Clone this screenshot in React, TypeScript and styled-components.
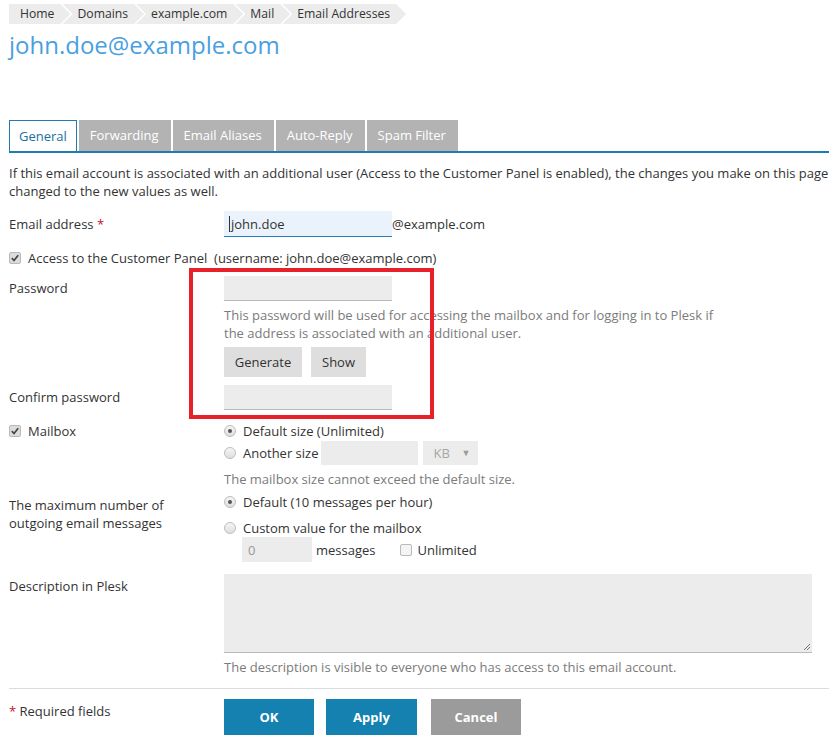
import React from 'react'
import styled, { createGlobalStyle } from 'styled-components'

const GlobalStyle = createGlobalStyle`
  html, body {
    margin: 0;
    padding: 0;
    background: #fff;
    overflow: hidden;
  }
  body {
    font-family: 'Open Sans', 'Liberation Sans', sans-serif;
    font-size: 13px;
    line-height: 18px;
    color: #333;
  }
`

const Page = styled.div`
  position: relative;
  width: 900px;
  padding: 4px 0 0 9px;
  box-sizing: border-box;
`

const Crumbs = styled.ul`
  display: flex;
  list-style: none;
  margin: 0;
  padding: 0;
  height: 20px;
  font-size: 12.2px;
`

const Crumb = styled.li<{ $first?: boolean }>`
  display: flex;
  align-items: center;
  height: 20px;
  background: #ececec;
  color: #333;
  padding: 0 16px 0 ${(p) => (p.$first ? '11px' : '15px')};
  margin-left: ${(p) => (p.$first ? '0' : '-8px')};
  clip-path: ${(p) =>
    p.$first
      ? 'polygon(0 0, calc(100% - 10px) 0, 100% 50%, calc(100% - 10px) 100%, 0 100%)'
      : 'polygon(0 0, calc(100% - 10px) 0, 100% 50%, calc(100% - 10px) 100%, 0 100%, 10px 50%)'};
`

const Title = styled.h1`
  margin: 3px 0 0;
  font-size: 24px;
  line-height: 36px;
  font-weight: 400;
  color: #4a9fe2;
`

const Tabs = styled.div`
  display: flex;
  gap: 2px;
  margin-top: 57px;
  border-bottom: 2px solid #1d7db3;
  width: 820px;
`

const Tab = styled.div<{ $active?: boolean }>`
  height: 31px;
  line-height: ${(p) => (p.$active ? '30px' : '31px')};
  padding: ${(p) => (p.$active ? '0 9px' : '0 12px 0 11px')};
  box-sizing: border-box;
  background: ${(p) => (p.$active ? '#fff' : '#b3b3b3')};
  color: ${(p) => (p.$active ? '#1a6f9f' : '#fff')};
  border: ${(p) => (p.$active ? '1px solid #1d7db3' : 'none')};
  border-bottom: none;
`

const Intro = styled.p`
  margin: 11px 0 0;
  white-space: nowrap;
`

const Row = styled.div<{ $mt: number }>`
  display: grid;
  grid-template-columns: 215px auto;
  align-items: start;
  margin-top: ${(p) => p.$mt}px;
`

const Label = styled.div<{ $pt?: number }>`
  padding-top: ${(p) => p.$pt ?? 0}px;
`

const Req = styled.span`
  color: #c8102e;
`

const Field = styled.div`
  display: flex;
  flex-direction: column;
  align-items: flex-start;
`

const Inline = styled.div<{ $h?: number }>`
  display: flex;
  align-items: center;
  height: ${(p) => (p.$h ? `${p.$h}px` : 'auto')};
`

const TextInput = styled.div<{ $w: number; $focus?: boolean; $h?: number; $flat?: boolean }>`
  width: ${(p) => p.$w}px;
  height: ${(p) => p.$h ?? 24}px;
  box-sizing: content-box;
  background: ${(p) => (p.$focus ? '#eaf3fb' : '#ececec')};
  border-bottom: ${(p) => (p.$flat ? 'none' : `1px solid ${p.$focus ? '#2a7db5' : '#b4bbc1'}`)};
  display: flex;
  align-items: center;
  color: #999;
`

const Value = styled.span`
  color: #333;
  border-left: 1px solid #333;
  margin-left: 5px;
  padding-left: 1px;
  line-height: 16px;
`

const Placeholder = styled.span`
  padding-left: 6px;
  color: #999;
`

const Hint = styled.div`
  color: #7b7b7b;
`

const GrayButton = styled.div<{ $w: number }>`
  width: ${(p) => p.$w}px;
  height: 30px;
  line-height: 30px;
  text-align: center;
  background: #dedede;
  color: #333;
`

const ButtonRow = styled.div<{ $gap: number }>`
  display: flex;
  gap: ${(p) => p.$gap}px;
`

const Box = styled.span<{ $checked?: boolean }>`
  display: inline-flex;
  align-items: center;
  justify-content: center;
  width: 10px;
  height: 10px;
  border: 1px solid #b9b9b9;
  border-radius: 2px;
  background: ${(p) => (p.$checked ? '#dcdcdc' : '#f4f4f4')};
  margin-right: 7px;
  flex-shrink: 0;
`

const Radio = styled.span<{ $checked?: boolean }>`
  width: 10px;
  height: 10px;
  border: 1px solid #bdbdbd;
  border-radius: 50%;
  background: linear-gradient(#f6f6f6, #dedede);
  margin-right: 7px;
  flex-shrink: 0;
  display: inline-flex;
  align-items: center;
  justify-content: center;
  &::after {
    content: '';
    display: ${(p) => (p.$checked ? 'block' : 'none')};
    width: 4px;
    height: 4px;
    border-radius: 50%;
    background: #555;
  }
`

const Select = styled.div`
  width: 55px;
  height: 24px;
  background: #ececec;
  margin-left: 5px;
  display: flex;
  align-items: center;
  justify-content: space-between;
  padding: 0 8px 0 10px;
  box-sizing: border-box;
  color: #a6a6a6;
`

const Caret = styled.span`
  font-size: 9px;
  color: #999;
`

const TextArea = styled.div`
  position: relative;
  width: 588px;
  height: 78px;
  background: #ececec;
  border-bottom: 1px solid #b4bbc1;
`

const Grip = styled.svg`
  position: absolute;
  right: 1px;
  bottom: 1px;
`

const Separator = styled.div`
  margin-top: 12px;
  height: 1px;
  background: #dcdcdc;
  width: 830px;
`

const Primary = styled.div<{ $w: number; $gray?: boolean }>`
  width: ${(p) => p.$w}px;
  height: 36px;
  line-height: 36px;
  text-align: center;
  background: ${(p) => (p.$gray ? '#9b9b9b' : '#1481b0')};
  color: #fff;
  font-weight: 700;
`

const Highlight = styled.div`
  position: absolute;
  left: 189px;
  top: 268px;
  width: 245px;
  height: 151px;
  border: 4px solid #e8202a;
  box-sizing: border-box;
  pointer-events: none;
`

const Check = () => (
  <svg width="8" height="8" viewBox="0 0 8 8">
    <path d="M0.8 4.2 L3 6.5 L7.2 1.2" fill="none" stroke="#444" strokeWidth="1.7" />
  </svg>
)

export default function App() {
  return (
    <>
      <GlobalStyle />
      <Page>
        <Crumbs>
          <Crumb $first>Home</Crumb>
          <Crumb>Domains</Crumb>
          <Crumb>example.com</Crumb>
          <Crumb>Mail</Crumb>
          <Crumb>Email Addresses</Crumb>
        </Crumbs>
        <Title>john.doe@example.com</Title>

        <Tabs>
          <Tab $active>General</Tab>
          <Tab>Forwarding</Tab>
          <Tab>Email Aliases</Tab>
          <Tab>Auto-Reply</Tab>
          <Tab>Spam Filter</Tab>
        </Tabs>

        <Intro>
          If this email account is associated with an additional user (Access to the Customer Panel is enabled), the
          changes you make on this page will be
          <br />
          changed to the new values as well.
        </Intro>

        <Row $mt={11}>
          <Label $pt={4}>
            Email address <Req>*</Req>
          </Label>
          <Inline>
            <TextInput $w={168} $h={25} $focus>
              <Value>john.doe</Value>
            </TextInput>
            <span>@example.com</span>
          </Inline>
        </Row>

        <Inline style={{ marginTop: 12 }}>
          <Box $checked>
            <Check />
          </Box>
          Access to the Customer Panel&nbsp;&nbsp;(username: john.doe@example.com)
        </Inline>

        <Row $mt={9}>
          <Label $pt={3}>Password</Label>
          <Field>
            <TextInput $w={168} />
            <Hint style={{ marginTop: 5 }}>
              This password will be used for accessing the mailbox and for logging in to Plesk if
              <br />
              the address is associated with an additional user.
            </Hint>
            <ButtonRow $gap={9} style={{ marginTop: 5 }}>
              <GrayButton $w={78}>Generate</GrayButton>
              <GrayButton $w={55}>Show</GrayButton>
            </ButtonRow>
          </Field>
        </Row>

        <Row $mt={8}>
          <Label $pt={3}>Confirm password</Label>
          <TextInput $w={168} />
        </Row>

        <Row $mt={12}>
          <Inline>
            <Box $checked>
              <Check />
            </Box>
            Mailbox
          </Inline>
          <Field>
            <Inline>
              <Radio $checked />
              Default size (Unlimited)
            </Inline>
            <Inline $h={24} style={{ marginTop: 1 }}>
              <Radio />
              Another size
              <TextInput $w={97} $h={24} $flat style={{ marginLeft: 3 }} />
              <Select>
                KB <Caret>▼</Caret>
              </Select>
            </Inline>
            <Hint style={{ marginTop: 5 }}>The mailbox size cannot exceed the default size.</Hint>
          </Field>
        </Row>

        <Row $mt={5}>
          <Label $pt={3}>
            The maximum number of
            <br />
            outgoing email messages
          </Label>
          <Field>
            <Inline>
              <Radio $checked />
              Default (10 messages per hour)
            </Inline>
            <Inline style={{ marginTop: 8 }}>
              <Radio />
              Custom value for the mailbox
            </Inline>
            <Inline style={{ marginLeft: 18 }}>
              <TextInput $w={70} $h={25} $flat>
                <Placeholder>0</Placeholder>
              </TextInput>
              <span style={{ marginLeft: 4 }}>messages</span>
              <Box style={{ marginLeft: 24, marginRight: 6 }} />
              Unlimited
            </Inline>
          </Field>
        </Row>

        <Row $mt={12}>
          <Label $pt={3}>Description in Plesk</Label>
          <Field>
            <TextArea>
              <Grip width="8" height="8" viewBox="0 0 8 8">
                <path d="M7 1 L1 7 M7 4 L4 7" stroke="#777" strokeWidth="1" />
              </Grip>
            </TextArea>
            <Hint style={{ marginTop: 5 }}>
              The description is visible to everyone who has access to this email account.
            </Hint>
          </Field>
        </Row>

        <Separator />

        <Row $mt={10}>
          <Label $pt={3}>
            <Req>*</Req> Required fields
          </Label>
          <ButtonRow $gap={12}>
            <Primary $w={90}>OK</Primary>
            <Primary $w={91}>Apply</Primary>
            <Primary $w={90} $gray style={{ marginLeft: 2 }}>
              Cancel
            </Primary>
          </ButtonRow>
        </Row>

        <Highlight />
      </Page>
    </>
  )
}
